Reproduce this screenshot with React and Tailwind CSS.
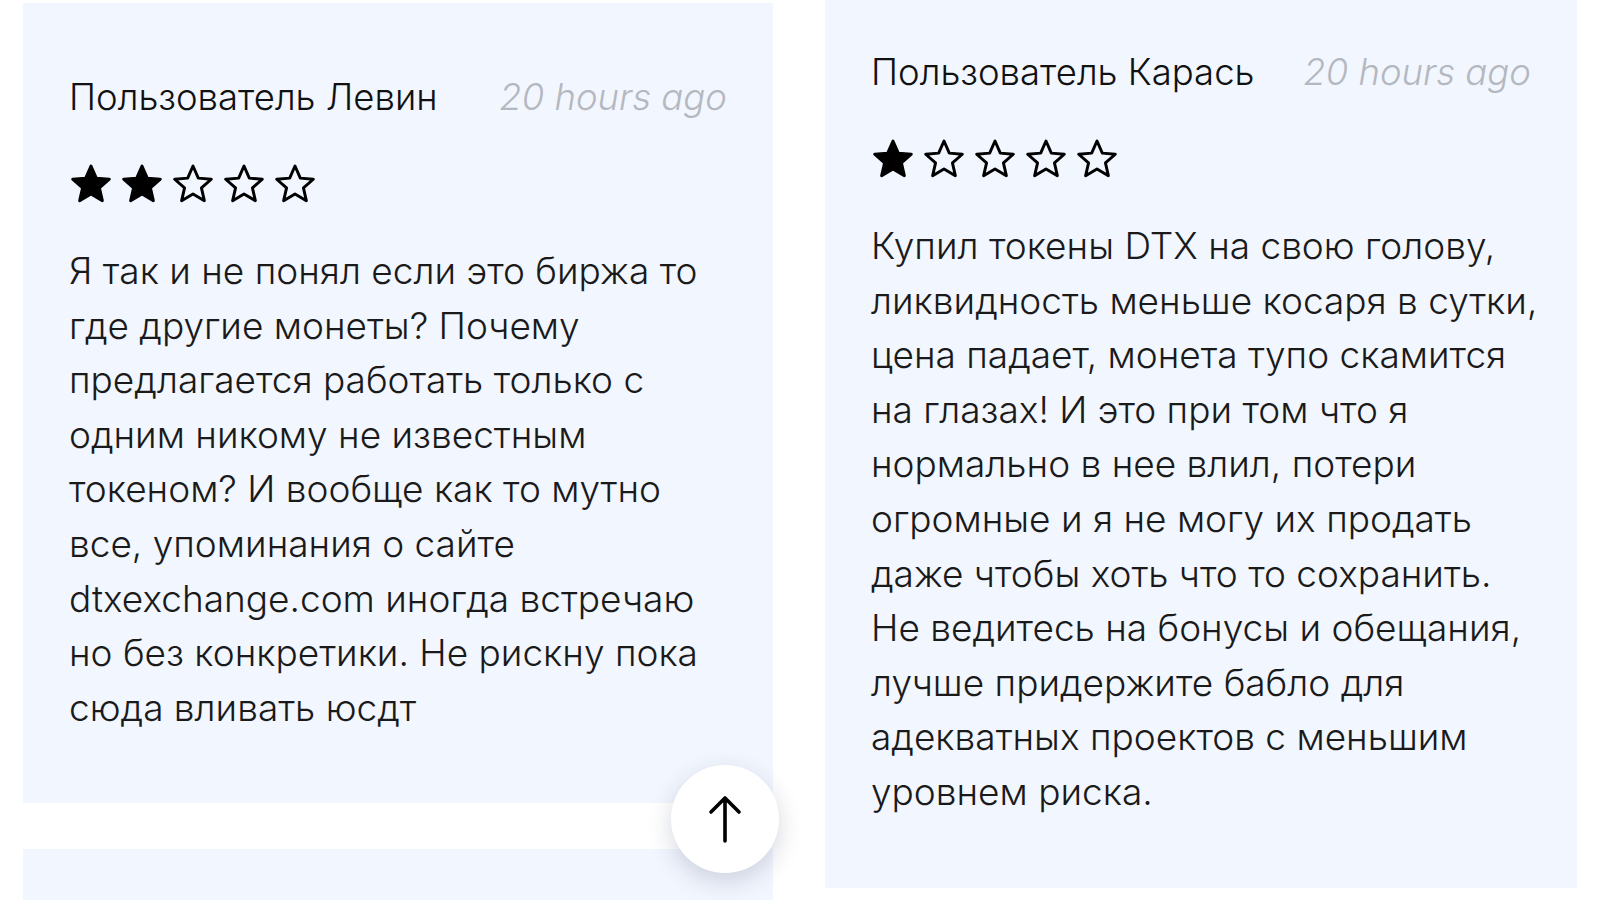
const reviews = [
  {
    id: 1,
    name: "Пользователь Левин",
    time: "20 hours ago",
    rating: 2,
    text: "Я так и не понял если это биржа то где другие монеты? Почему предлагается работать только с одним никому не известным токеном? И вообще как то мутно все, упоминания о сайте dtxexchange.com иногда встречаю но без конкретики. Не рискну пока сюда вливать юсдт",
  },
  {
    id: 2,
    name: "Пользователь Карась",
    time: "20 hours ago",
    rating: 1,
    text: "Купил токены DTX на свою голову, ликвидность меньше косаря в сутки, цена падает, монета тупо скамится на глазах! И это при том что я нормально в нее влил, потери огромные и я не могу их продать даже чтобы хоть что то сохранить. Не ведитесь на бонусы и обещания, лучше придержите бабло для адекватных проектов с меньшим уровнем риска.",
  },
];

const Star = ({ filled }) => (
  <svg width="44" height="44" viewBox="0 0 24 24" className="shrink-0">
    <path
      d="M12 2.2l2.9 6.6 7.1.6-5.4 4.7 1.6 7-6.2-3.7-6.2 3.7 1.6-7L2 9.4l7.1-.6z"
      fill={filled ? "#000" : "none"}
      stroke="#000"
      strokeWidth="1.6"
      strokeLinejoin="round"
    />
  </svg>
);

const ReviewCard = ({ review, className, textClass = "" }) => (
  <div className={`bg-[#f2f6fe] px-[46px] ${className}`}>
    <div className="flex items-center justify-between">
      <span className="text-[36.5px] font-light leading-[54px] text-[#111]">
        {review.name}
      </span>
      <span className="text-[36.5px] font-light leading-[54px] italic text-[#b4b8c0]">
        {review.time}
      </span>
    </div>
    <div className="mt-[38px] flex gap-[7px]">
      {[1, 2, 3, 4, 5].map((i) => (
        <Star key={i} filled={i <= review.rating} />
      ))}
    </div>
    <p
      className={`mt-[38px] text-[37px] font-light leading-[54.6px] text-[#1a1a1a] ${textClass}`}
    >
      {review.text}
    </p>
  </div>
);

export default function App() {
  return (
    <div
      className="relative h-[900px] w-[1600px] overflow-hidden bg-white"
      style={{ fontFamily: "Inter, 'Noto Sans', sans-serif" }}
    >
      <div className="flex gap-[52px] pl-[23px] pt-[3px]">
        <div className="flex w-[750px] flex-col gap-[46px]">
          <ReviewCard
            review={reviews[0]}
            className="h-[800px] pt-[67px]"
          />
          <div className="h-[120px] bg-[#f2f6fe]" />
        </div>
        <ReviewCard
          review={reviews[1]}
          className="-mt-[25px] h-[910px] w-[752px] pt-[67px]"
          textClass="-mr-[10px]"
        />
      </div>

      <button className="absolute left-[671px] top-[765px] flex h-[108px] w-[108px] items-center justify-center rounded-full bg-white shadow-[0_8px_24px_rgba(30,40,80,0.18)]">
        <svg width="34" height="48" viewBox="0 0 34 48" fill="none">
          <path
            d="M17 46V4M3 17L17 3l14 14"
            stroke="#000"
            strokeWidth="3.6"
            strokeLinecap="round"
            strokeLinejoin="round"
          />
        </svg>
      </button>
    </div>
  );
}
